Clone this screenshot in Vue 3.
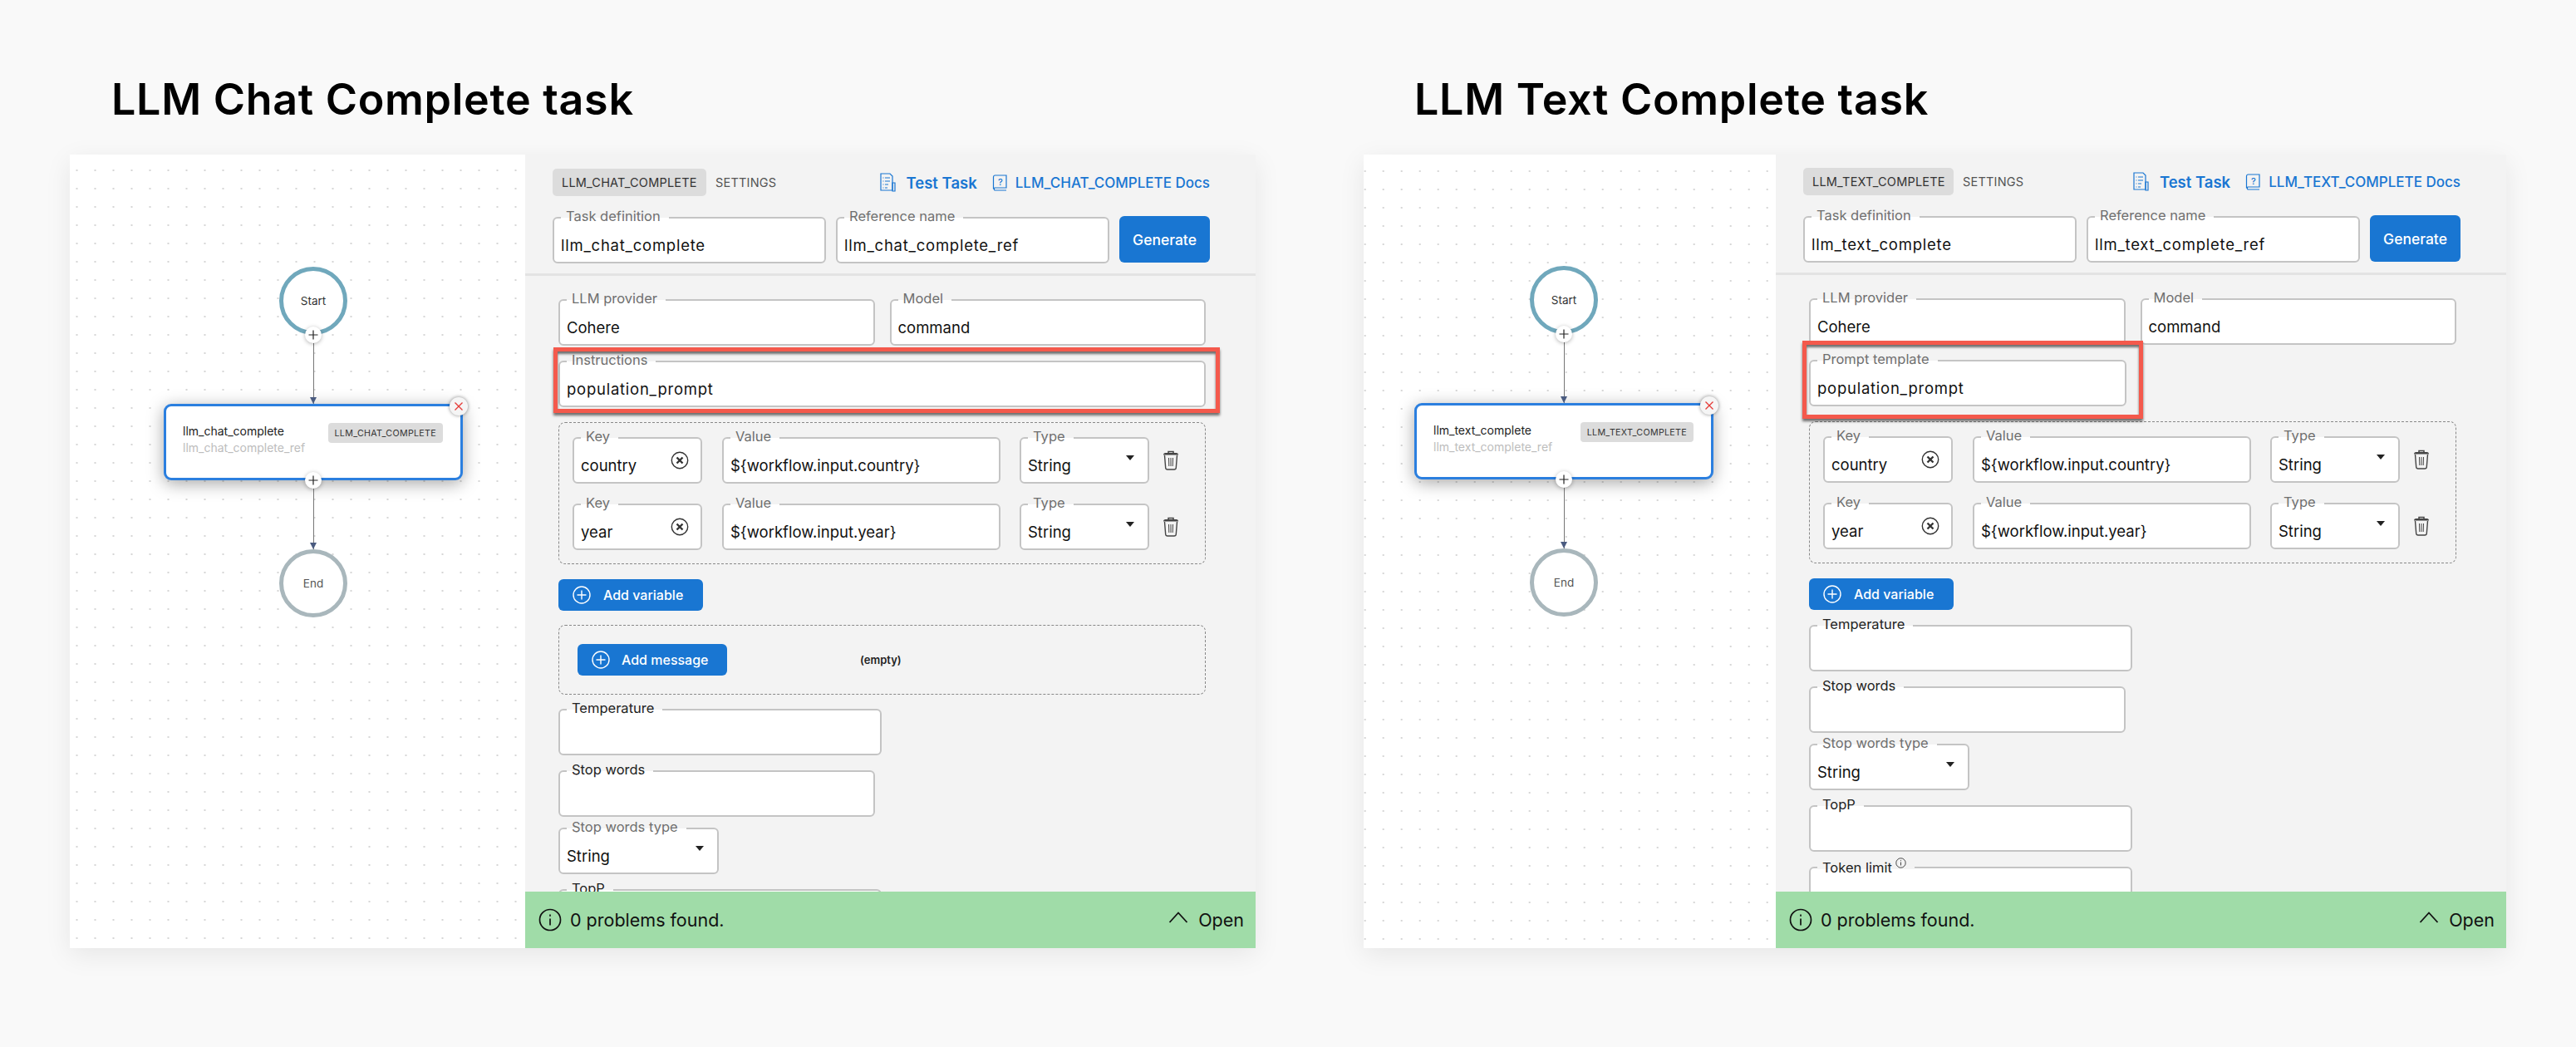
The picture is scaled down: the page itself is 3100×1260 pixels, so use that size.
<script setup>
const variables = [
  { key: 'country', value: '${workflow.input.country}' },
  { key: 'year', value: '${workflow.input.year}' },
];

const tasks = [
  {
    id: 'chat',
    heading: 'LLM Chat Complete task',
    type: 'LLM_CHAT_COMPLETE',
    name: 'llm_chat_complete',
    promptLabel: 'Instructions',
    extra: [
      { label: 'Temperature', cls: 'wide dark' },
      { label: 'Stop words', cls: 'half dark' },
      { label: 'Stop words type', cls: 'small tight', value: 'String', select: true },
      { label: 'TopP', cls: 'wide dark' },
    ],
  },
  {
    id: 'text',
    heading: 'LLM Text Complete task',
    type: 'LLM_TEXT_COMPLETE',
    name: 'llm_text_complete',
    promptLabel: 'Prompt template',
    extra: [
      { label: 'Temperature', cls: 'wide dark' },
      { label: 'Stop words', cls: 'half dark' },
      { label: 'Stop words type', cls: 'small tight', value: 'String', select: true },
      { label: 'TopP', cls: 'wide dark' },
      { label: 'Token limit', cls: 'wide dark', hint: true },
    ],
  },
];
</script>

<template>
  <div class="page">
    <section v-for="task in tasks" :key="task.id" class="block" :class="task.id">
      <h1 class="heading">{{ task.heading }}</h1>

      <div class="frame">
        <!-- DIAGRAM -->
        <div class="canvas">
          <div class="graph">
            <div class="terminal start">Start</div>
            <div class="link">
              <span class="add-dot">
                <svg width="14" height="14" viewBox="0 0 14 14"><path d="M7 1.500v11M1.500 7h11" stroke="#222" stroke-width="1.200" /></svg>
              </span>
            </div>
            <div class="node">
              <div class="node-names">
                <div class="node-name">{{ task.name }}</div>
                <div class="node-ref">{{ task.name }}_ref</div>
              </div>
              <span class="node-type">{{ task.type }}</span>
              <span class="node-close">
                <svg width="12" height="12" viewBox="0 0 12 12"><path d="M1.500 1.500l9 9M10.500 1.500l-9 9" stroke="#e53935" stroke-width="1.300" /></svg>
              </span>
            </div>
            <div class="link">
              <span class="add-dot">
                <svg width="14" height="14" viewBox="0 0 14 14"><path d="M7 1.500v11M1.500 7h11" stroke="#222" stroke-width="1.200" /></svg>
              </span>
            </div>
            <div class="terminal end">End</div>
          </div>
        </div>

        <!-- FORM PANEL -->
        <div class="panel">
          <div class="panel-head">
            <div class="tabs-row">
              <span class="tab active">{{ task.type }}</span>
              <span class="tab">SETTINGS</span>
              <a class="test-link">
                <svg width="20" height="23" viewBox="0 0 20 23" fill="none" stroke="#1976d2" stroke-width="1.200">
                  <path d="M2 1h11l3 3v17H2z" />
                  <path d="M4.500 6h1M7 6h6M4.500 10h1M7 10h6M4.500 14h1M7 14h4M4.500 18h1M7 18h3" />
                  <path d="M16 12h3v10h-3z" />
                </svg>
                Test Task
              </a>
              <a class="docs-link">
                <svg width="18" height="20" viewBox="0 0 18 20" fill="none" stroke="#1976d2" stroke-width="1.200">
                  <path d="M3 1h14v15H3a2 2 0 0 0 0 3h14M1.500 17.500V3a2 2 0 0 1 1.500-2" />
                  <text x="10" y="12.500" font-size="11" text-anchor="middle" fill="#1976d2" stroke="none" font-family="Inter, sans-serif">?</text>
                </svg>
                {{ task.type }} Docs
              </a>
            </div>
            <div class="name-row">
              <div class="field">
                <label class="field-label">Task definition</label>
                <span class="field-value snake">{{ task.name }}</span>
              </div>
              <div class="field">
                <label class="field-label">Reference name</label>
                <span class="field-value snake">{{ task.name }}_ref</span>
              </div>
              <button class="btn generate">Generate</button>
            </div>
          </div>

          <div class="panel-body">
            <div class="two-col">
              <div class="field">
                <label class="field-label">LLM provider</label>
                <span class="field-value">Cohere</span>
              </div>
              <div class="field">
                <label class="field-label">Model</label>
                <span class="field-value">command</span>
              </div>
            </div>

            <div class="prompt-row">
              <div class="field prompt-field">
                <label class="field-label">{{ task.promptLabel }}</label>
                <span class="field-value snake">population_prompt</span>
                <span class="highlight"></span>
              </div>
            </div>

            <!-- VARIABLES -->
            <div class="dashed vars">
              <div v-for="v in variables" :key="v.key" class="var-row">
                <div class="field key-field">
                  <label class="field-label">Key</label>
                  <span class="field-value">{{ v.key }}</span>
                  <svg class="clear-icon" width="22" height="22" viewBox="0 0 22 22" fill="none" stroke="#333">
                    <circle cx="11" cy="11" r="9.700" stroke-width="1.400" />
                    <path d="M7.500 7.500l7 7M14.500 7.500l-7 7" stroke-width="2.400" />
                  </svg>
                </div>
                <div class="field value-field">
                  <label class="field-label">Value</label>
                  <span class="field-value">{{ v.value }}</span>
                </div>
                <div class="field type-field">
                  <label class="field-label">Type</label>
                  <span class="field-value">String</span>
                  <span class="caret"></span>
                </div>
                <svg class="trash" width="20" height="24" viewBox="0 0 20 24" fill="none" stroke="#444">
                  <path d="M7 3V1.500h6V3" stroke-width="1.500" />
                  <path d="M1 5.500q0-2.500 2.500-2.500h13q2.500 0 2.500 2.500z" fill="#444" stroke="none" />
                  <path d="M2.500 6l1.200 15q.2 2 2.300 2h8q2.100 0 2.300-2l1.200-15" stroke-width="1.400" />
                  <path d="M7.500 9l.3 10M10 9v10M12.500 9l-.3 10" stroke-width="1" />
                </svg>
              </div>
            </div>

            <button class="btn add-btn add-var">
              <svg width="22" height="22" viewBox="0 0 22 22" fill="none" stroke="#fff" stroke-width="1.400">
                <circle cx="11" cy="11" r="10" />
                <path d="M11 5.500v11M5.500 11h11" />
              </svg>
              Add variable
            </button>

            <div v-if="task.id === 'chat'" class="dashed messages">
              <button class="btn add-btn add-msg">
                <svg width="22" height="22" viewBox="0 0 22 22" fill="none" stroke="#fff" stroke-width="1.400">
                  <circle cx="11" cy="11" r="10" />
                  <path d="M11 5.500v11M5.500 11h11" />
                </svg>
                Add message
              </button>
              <span class="empty">(empty)</span>
            </div>

            <div v-for="f in task.extra" :key="f.label" class="field" :class="f.cls">
              <label class="field-label">
                {{ f.label }}
                <svg v-if="f.hint" class="hint" width="13" height="13" viewBox="0 0 13 13" fill="none" stroke="#444">
                  <circle cx="6.500" cy="6.500" r="5.700" />
                  <path d="M6.500 5.500v4M6.500 3.200v1" />
                </svg>
              </label>
              <span v-if="f.value" class="field-value">{{ f.value }}</span>
              <span v-if="f.select" class="caret"></span>
            </div>
          </div>

          <!-- STATUS BAR -->
          <div class="status">
            <svg width="28" height="28" viewBox="0 0 28 28" fill="none" stroke="#111" stroke-width="1.700">
              <circle cx="14" cy="14" r="12.500" />
              <path d="M14 12.500v8M14 7.500v2.200" />
            </svg>
            <span class="status-text">0 problems found.</span>
            <svg class="chevron" width="24" height="14" viewBox="0 0 24 14" fill="none" stroke="#111" stroke-width="1.800">
              <path d="M1.500 13L12 1.500 22.500 13" />
            </svg>
            <span class="status-open">Open</span>
          </div>
        </div>
      </div>
    </section>
  </div>
</template>

<style>
body {
  background: #f9f9f9;
}
</style>

<style scoped>
.page {
  width: 3100px;
  height: 1260px;
  padding-left: 84px;
  box-sizing: border-box;
  display: flex;
  gap: 130px;
  overflow: hidden;
  background: #f9f9f9;
  font-family: Inter, "Noto Sans", sans-serif;
  color: #111;
}

.heading {
  margin: 0 0 36px 50px;
  padding-top: 90px;
  font-size: 52px;
  line-height: 60px;
  font-weight: 600;
  color: #000;
  letter-spacing: 0.7px;
  white-space: nowrap;
}

.text .heading {
  margin-left: 61px;
}

.frame {
  display: flex;
  height: 955px;
  box-shadow: 0 8px 30px rgba(0, 0, 0, 0.08);
}

/* DIAGRAM */
.canvas {
  width: 548px;
  background-color: #fff;
  background-image: radial-gradient(circle, #cbcbcb 0.6px, transparent 1.1px);
  background-size: 22px 22px;
  background-position: -2.5px 8px;
  padding-top: 135px;
  box-sizing: border-box;
}

.text .canvas {
  width: 496px;
  background-position: -9.3px 9px;
  padding-top: 134px;
}

.graph {
  width: 360px;
  margin-left: 113px;
  display: flex;
  flex-direction: column;
  align-items: center;
}

.text .graph {
  margin-left: 61px;
}

.terminal {
  width: 82px;
  height: 82px;
  border-radius: 50%;
  box-sizing: border-box;
  background: #fff;
  display: flex;
  align-items: center;
  justify-content: center;
  font-size: 13.5px;
  color: #333;
}

.terminal.start {
  border: 5px solid #70a8bc;
}

.terminal.end {
  border: 5px solid #a9b7bc;
  color: #555;
}

.link {
  position: relative;
  z-index: 2;
  width: 1px;
  height: 83px;
  background: #777;
}

.link::after {
  content: '';
  position: absolute;
  left: -4px;
  bottom: 0;
  border-left: 4.5px solid transparent;
  border-right: 4.5px solid transparent;
  border-top: 8px solid #4a5b80;
}

.add-dot {
  position: absolute;
  top: -10px;
  left: -10px;
  width: 20px;
  height: 20px;
  border-radius: 50%;
  background: #fff;
  box-shadow: 0 1px 5px rgba(0, 0, 0, 0.3);
  display: flex;
  align-items: center;
  justify-content: center;
}

.node {
  position: relative;
  z-index: 1;
  width: 360px;
  height: 92px;
  box-sizing: border-box;
  background: #fff;
  border: 3px solid #2b7fdf;
  border-radius: 9px;
  box-shadow: 0 4px 20px rgba(0, 0, 0, 0.35);
  display: flex;
  padding: 20px 21px 0 20px;
  justify-content: space-between;
}

.node-names {
  flex: none;
  white-space: nowrap;
}

.node-name {
  font-size: 14px;
  line-height: 20px;
  color: #222;
}

.node-ref {
  font-size: 14px;
  line-height: 20px;
  color: #bdbdbd;
}

.node-type {
  height: 24px;
  padding: 0 8px;
  border-radius: 4px;
  background: #dcdcdc;
  font-size: 10.7px;
  line-height: 25px;
  color: #333;
  letter-spacing: 0.3px;
}

.node-close {
  position: absolute;
  top: -11px;
  right: -9px;
  width: 22px;
  height: 22px;
  border-radius: 50%;
  background: #f5f5f5;
  box-shadow: 0 0 4px rgba(0, 0, 0, 0.45);
  display: flex;
  align-items: center;
  justify-content: center;
}

/* PANEL */
.panel {
  width: 879px;
  display: flex;
  flex-direction: column;
  background: #f3f3f3;
  overflow: hidden;
}

.panel-head {
  padding: 17px 55px 0 33px;
  height: 146px;
  box-sizing: border-box;
  border-bottom: 3px solid #e3e3e3;
  flex: none;
}

.text .panel-head {
  padding-top: 16px;
  height: 145px;
}

.tabs-row {
  display: flex;
  align-items: center;
  height: 33px;
}

.tab {
  font-size: 14.5px;
  line-height: 33px;
  padding: 0 11px;
  color: #555;
  letter-spacing: 0.2px;
}

.tab.active {
  background: #dcdcdc;
  border-radius: 5px;
  color: #333;
  width: 185px;
  box-sizing: border-box;
  white-space: nowrap;
}

.text .tab.active {
  width: 181px;
}

.test-link,
.docs-link {
  display: flex;
  align-items: center;
  color: #1976d2;
  font-weight: 500;
  white-space: nowrap;
}

.test-link {
  margin-left: auto;
  gap: 13px;
  font-size: 18.5px;
  font-weight: 600;
}

.docs-link {
  margin-left: 18px;
  gap: 10px;
  font-size: 17px;
}

.name-row {
  display: flex;
  gap: 12px;
  margin-top: 25px;
}

.name-row .field {
  width: 329px;
}

/* FIELDS */
.field {
  position: relative;
  flex: none;
  height: 56px;
  box-sizing: border-box;
  background: #fff;
  border: 2px solid #c4c4c4;
  border-radius: 6px;
}

.field-label {
  position: absolute;
  top: -13px;
  left: 8px;
  padding: 0 10px 0 6px;
  font-size: 16.5px;
  line-height: 20px;
  color: #6f6f6f;
  white-space: nowrap;
  background: linear-gradient(#f3f3f3 62%, #fff 62%);
}

.dark .field-label {
  color: #222;
}

.field-value {
  position: absolute;
  left: 8px;
  top: 18px;
  font-size: 18.5px;
  line-height: 28px;
  color: #111;
  white-space: nowrap;
}

.field-value.snake {
  letter-spacing: 0.75px;
}

.caret {
  position: absolute;
  right: 16px;
  top: 20px;
  border-left: 5px solid transparent;
  border-right: 5px solid transparent;
  border-top: 6px solid #222;
}

.btn {
  border: none;
  border-radius: 6px;
  background: #1976d2;
  color: #fff;
  font-family: inherit;
  font-weight: 500;
}

.generate {
  width: 110px;
  height: 56px;
  font-size: 17.5px;
  margin-top: -1px;
}

.panel-body {
  flex: 1;
  min-height: 0;
  overflow: hidden;
  padding: 28px 60px 0 40px;
  display: flex;
  flex-direction: column;
  align-items: flex-start;
  gap: 18px;
}

.panel-body > * {
  flex: none;
}

.two-col {
  display: flex;
  gap: 18px;
  width: 779px;
}

.two-col .field {
  flex: 1;
}

.prompt-row {
  width: 779px;
}

.chat .prompt-field {
  width: 779px;
}

.text .prompt-field {
  width: 382px;
}

.highlight {
  position: absolute;
  border: 5px solid #f4594c;
  box-shadow: 0 3px 3px rgba(0, 0, 0, 0.55), inset 0 3px 3px rgba(0, 0, 0, 0.55);
  pointer-events: none;
}

.chat .highlight {
  left: -8px;
  right: -19px;
  top: -18px;
  bottom: -9px;
}

.text .highlight {
  left: -10px;
  right: -22px;
  top: -25px;
  bottom: -17px;
}

.dashed {
  width: 779px;
  box-sizing: border-box;
  border: 1.5px dashed #888;
  border-radius: 8px;
}

.vars {
  height: 171px;
  padding: 17px 0 0 16px;
  display: flex;
  flex-direction: column;
  gap: 24px;
}

.var-row {
  display: flex;
  align-items: center;
}

.key-field {
  width: 156px;
}

.value-field {
  width: 335px;
  margin-left: 24px;
}

.type-field {
  width: 156px;
  margin-left: 23px;
}

.clear-icon {
  position: absolute;
  right: 14px;
  top: 15px;
}

.trash {
  margin-left: 16px;
}

.add-btn {
  display: flex;
  align-items: center;
  height: 38px;
  font-size: 16px;
}

.add-var {
  width: 174px;
  padding-left: 17px;
  gap: 15px;
}

.messages {
  height: 84px;
  margin-top: -1px;
  margin-bottom: -1px;
  padding: 22px 0 0 22px;
  display: flex;
  align-items: flex-start;
}

.add-msg {
  width: 180px;
  padding-left: 17px;
  gap: 14px;
}

.empty {
  margin: 11px 0 0 160px;
  font-size: 13px;
  font-weight: 600;
  color: #222;
}

.wide {
  width: 389px;
}

.half {
  width: 381px;
}

.small {
  width: 193px;
  margin-top: -5px;
}

.hint {
  vertical-align: 5px;
}

/* STATUS BAR */
.status {
  flex: none;
  height: 68px;
  background: #a0dca8;
  display: flex;
  align-items: center;
  padding: 0 14px 0 16px;
  position: relative;
}

.status-text {
  margin-left: 10px;
  font-size: 21.5px;
  color: #111;
}

.chevron {
  margin-left: auto;
  margin-top: -6px;
}

.status-open {
  margin-left: 12px;
  font-size: 21.5px;
}
</style>
